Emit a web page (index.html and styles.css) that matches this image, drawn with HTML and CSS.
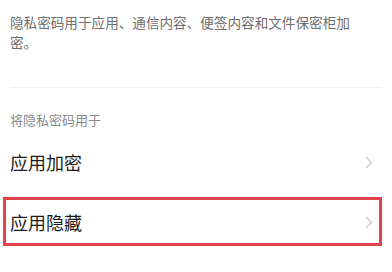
FILE: index.html
```html
<!DOCTYPE html>
<html lang="zh-CN">
<head>
<meta charset="utf-8">
<link rel="stylesheet" href="styles.css">
</head>
<body>
<div class="page">
  <p class="desc">隐私密码用于应用、通信内容、便签内容和文件保密柜加密。</p>
  <div class="divider"></div>
  <div class="section-title">将隐私密码用于</div>
  <div class="row first">
    <span class="label">应用加密</span>
    <svg class="chev" width="8" height="13" viewBox="0 0 8 13"><path d="M1 1 L6.5 6.5 L1 12" fill="none" stroke="#c9c9c9" stroke-width="1.3"/></svg>
  </div>
  <div class="row highlight">
    <span class="label">应用隐藏</span>
    <svg class="chev" width="8" height="13" viewBox="0 0 8 13"><path d="M1 1 L6.5 6.5 L1 12" fill="none" stroke="#c9c9c9" stroke-width="1.3"/></svg>
  </div>
</div>
</body>
</html>
```
FILE: styles.css
```css
html, body {
  margin: 0;
  padding: 0;
  background: #ffffff;
}
.page {
  width: 392px;
  height: 272px;
  overflow: hidden;
  font-family: "Noto Sans CJK SC", "Noto Sans", sans-serif;
  display: flex;
  flex-direction: column;
}
.desc {
  margin: 0;
  padding: 12px 40px 35px 10px;
  font-size: 13.6px;
  line-height: 20px;
  color: #6e6e6e;
}
.divider {
  height: 1px;
  background: #f3f3f3;
  margin: 0 10px;
}
.section-title {
  margin-top: 22px;
  padding: 0 10px;
  font-size: 13px;
  line-height: 20px;
  color: #8a8a8a;
}
.row {
  height: 50px;
  flex: none;
  display: flex;
  align-items: center;
  justify-content: space-between;
  padding: 0 19px 0 10px;
}
.row.first {
  margin-top: 7px;
}
.row + .row {
  margin-top: 10px;
}
.label {
  font-size: 18px;
  color: #1c1c1c;
}
.highlight {
  position: relative;
}
.highlight::after {
  content: "";
  position: absolute;
  left: 3px;
  top: 0;
  width: 373px;
  height: 43px;
  border: 3px solid #e2424a;
}
```
